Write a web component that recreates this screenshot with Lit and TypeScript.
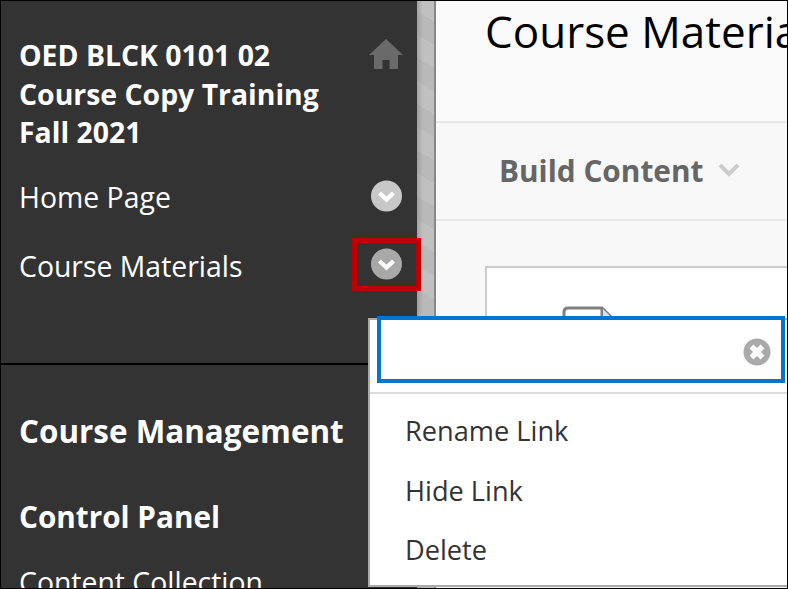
import { LitElement, html, css, svg } from "lit";
import { customElement } from "lit/decorators.js";

const chevron = svg`<svg class="chev" viewBox="0 0 32 32" width="32" height="32"><circle cx="15.5" cy="16" r="15.5" fill="currentColor"/><path d="M8.5 13 L15.5 19.5 L22.5 13" fill="none" stroke="#fff" stroke-width="4.4"/></svg>`;

@customElement("app-root")
export class AppRoot extends LitElement {
  static styles = css`
    :host { display: block; width: 788px; height: 589px; font-family: "Open Sans", sans-serif; }
    * { box-sizing: border-box; }
    .page { position: relative; width: 788px; height: 589px; display: flex; overflow: hidden; background: #fff; }
    .frame { position: absolute; inset: 0; border: 1px solid #000; pointer-events: none; z-index: 5; }
    .side { position: relative; z-index: 1; width: 417px; height: 589px; flex: none; background: #333; color: #fff; }
    .top { height: 365px; padding: 36px 0 0 19px; border-bottom: 2px solid #000; }
    .course { display: flex; justify-content: space-between; }
    .course h1 { margin: 0; font-size: 28.4px; line-height: 38.5px; font-weight: 700; white-space: nowrap; }
    .home { margin: 3px 14px 0 0; flex: none; }
    .link { display: flex; justify-content: space-between; align-items: center; font-size: 28.4px; height: 36px; }
    .link.first { margin-top: 27px; margin-bottom: 33px; }
    .chev { color: #c8c8c8; filter: blur(0.5px); }
    .chev-wrap { width: 69px; height: 53px; display: flex; align-items: center; justify-content: center; margin-right: -4px; margin-top: -2px; border: 5px solid transparent; }
    .outlined { border-color: #c00000; margin-top: -3px; }
    .dim .chev { color: #a8a8a8; }
    .bottom { padding: 0 19px; }
    .bottom h2 { margin: 0; font-size: 31.4px; font-weight: 700; line-height: 40px; padding-top: 46px; white-space: nowrap; }
    .bottom h3 { margin: 0; font-size: 29.7px; font-weight: 700; line-height: 40px; padding-top: 46px; white-space: nowrap; }
    .bottom p { margin: 0; font-size: 28.4px; line-height: 36px; padding-top: 27px; white-space: nowrap; }
    .strip { width: 17px; flex: none; height: 589px; background: linear-gradient(90deg, rgba(120,120,120,.4), rgba(120,120,120,0) 6px), repeating-linear-gradient(30deg, #b9b9b9 0 20px, #c0c0c0 20px 40px); }
    .rule { width: 2px; flex: none; background: #888; }
    .main { flex: 1; min-width: 0; background: #f8f8f8; overflow: hidden; }
    .title { height: 123px; border-bottom: 2px solid #e8e8e8; background: #fafafa; padding: 5px 0 0 49px; }
    .title h1 { margin: 0; font-size: 44px; font-weight: 400; color: #000; line-height: 52px; white-space: nowrap; }
    .tools { height: 98px; border-bottom: 2px solid #e8e8e8; padding: 0 0 2px 63px; display: flex; align-items: center; gap: 15px; color: #666; font-size: 29.8px; font-weight: 700; }
    .body { padding: 45px 0 0 49px; }
    .card { height: 320px; background: #fff; border: 2px solid #ccc; border-right: 0; padding: 38px 0 0 75px; }
    .menu { position: absolute; left: 368px; top: 318px; width: 420px; height: 269px; background: #fff; border: 2px solid #aaa; border-right: 0; z-index: 2; }
    .field { position: absolute; left: 7px; top: -4px; width: 408px; height: 67px; border: 4px solid #0275d0; display: flex; align-items: center; justify-content: flex-end; padding: 5px 10px 0 0; background: #fff; }
    .sep { margin-top: 72px; border-top: 2px solid #ddd; }
    .menu ul { list-style: none; margin: 0; padding: 7px 0 0 35px; color: #333; font-size: 27.2px; }
    .menu li { height: 59.5px; line-height: 59px; }
  `;

  render() {
    return html`
      <div class="page">
        <aside class="side">
          <div class="top">
            <div class="course">
              <h1>OED BLCK 0101 02<br />Course Copy Training<br />Fall 2021</h1>
              <svg class="home" width="34" height="30" viewBox="0 0 34 30"><path d="M17 0 L34 16 H29 V30 H20.5 V21 H13.5 V30 H5 V16 H0 Z" fill="#6a6a6a"/></svg>
            </div>
            <div class="link first"><span>Home Page</span><span class="chev-wrap">${chevron}</span></div>
            <div class="link"><span>Course Materials</span><span class="chev-wrap outlined dim">${chevron}</span></div>
          </div>
          <div class="bottom">
            <h2>Course Management</h2>
            <h3>Control Panel</h3>
            <p>Content Collection</p>
          </div>
        </aside>
        <div class="strip"></div>
        <div class="rule"></div>
        <main class="main">
          <div class="title"><h1>Course Materials</h1></div>
          <div class="tools">
            <span>Build Content</span>
            <svg width="22" height="14" viewBox="0 0 22 14"><path d="M2 2 L11 11 L20 2" fill="none" stroke="#ccc" stroke-width="4"/></svg>
          </div>
          <div class="body">
            <div class="card">
              <svg width="56" height="50" viewBox="0 0 56 50"><path d="M2 30 V6 Q2 2 6 2 H40 L54 16 V30 M40 2 V16 H54" fill="#fff" stroke="#808080" stroke-width="3"/><path d="M41 3 L53 15 H41 Z" fill="#d4e2f0"/></svg>
            </div>
          </div>
        </main>
        <div class="menu">
          <div class="field">
            <svg width="28" height="28" viewBox="0 0 28 28"><circle cx="14" cy="14" r="13.5" fill="#aaa"/><path d="M8.5 8.5 L19.5 19.5 M19.5 8.5 L8.5 19.5" stroke="#fff" stroke-width="5.5"/></svg>
          </div>
          <div class="sep"></div>
          <ul>
            <li>Rename Link</li>
            <li>Hide Link</li>
            <li>Delete</li>
          </ul>
        </div>
        <div class="frame"></div>
      </div>
    `;
  }
}
